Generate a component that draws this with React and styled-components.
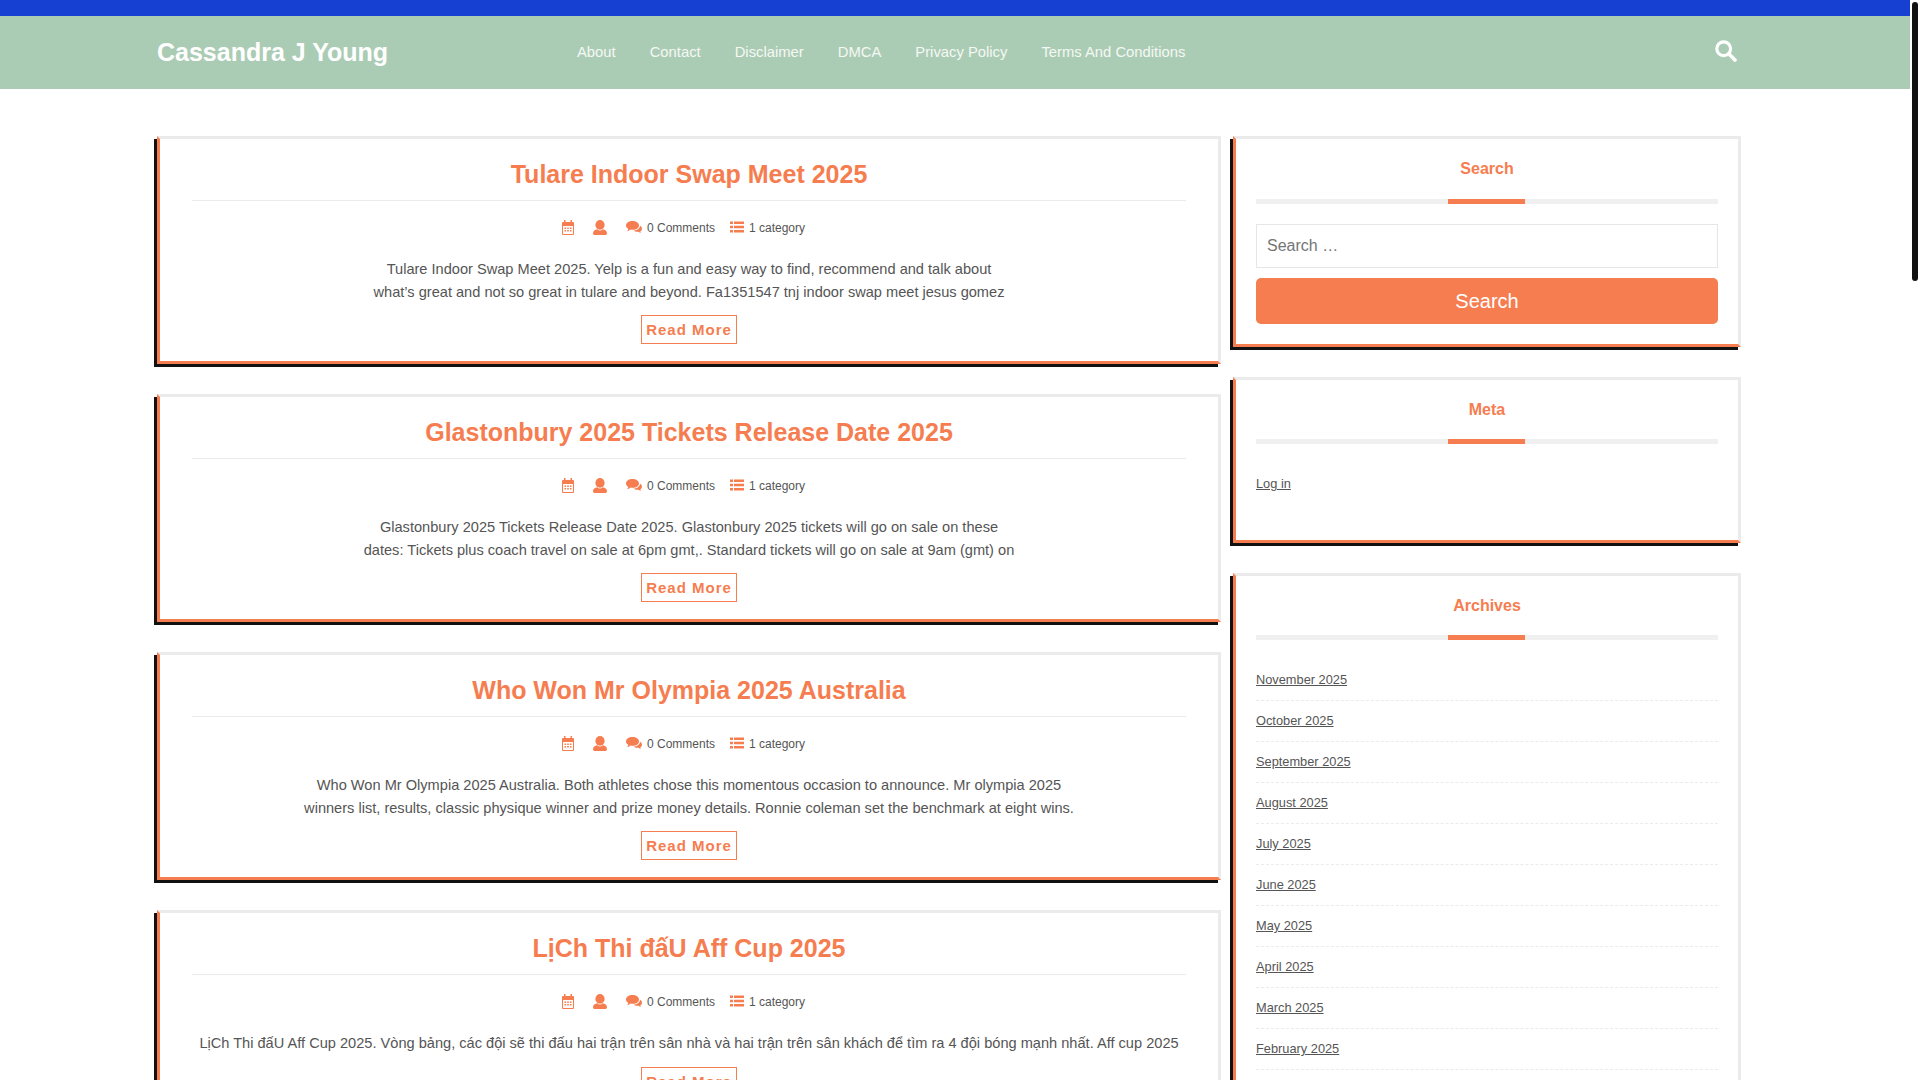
import React from 'react';
import styled, { createGlobalStyle } from 'styled-components';

const orange = '#f57d4f';

const GlobalStyle = createGlobalStyle`
    body {
        margin: 0;
        background: #fff;
        font-family: "Liberation Sans", Arial, sans-serif;
        color: #555;
    }
`;

const Page = styled.div`
    width: 1910px;
`;

// the site has a custom scrollbar, only the thumb can be seen
const ScrollThumb = styled.div`
    position: fixed;
    top: 2px;
    right: 2px;
    width: 6px;
    height: 279px;
    border-radius: 3px;
    background: #111;
`;

const TopBar = styled.div`
    height: 16px;
    background: #1540d2;
`;

const Header = styled.header`
    height: 73px;
    background: #abccb4;
    display: flex;
    align-items: center;
    padding: 0 173px 0 157px;
`;

const Logo = styled.a`
    width: 420px;
    color: #fff;
    font-size: 25px;
    font-weight: bold;
`;

const Nav = styled.nav`
    display: flex;
    gap: 34px;
    flex: 1;
    margin-top: -2px;
`;

const NavLink = styled.a`
    color: #f5f8f5;
    font-size: 14.8px;
`;

const SearchToggle = styled.svg`
    width: 22px;
    height: 22px;
    margin-top: -3px;
`;

const Content = styled.div`
    display: grid;
    grid-template-columns: 1064px 508px;
    column-gap: 12px;
    padding: 47px 0 0 157px;
`;

const Column = styled.div`
    display: flex;
    flex-direction: column;
    gap: 30px;
`;

const Card = styled.article`
    box-sizing: border-box;
    border: 3px solid #ebebeb;
    border-bottom-color: ${orange};
    border-left-color: ${orange};
    box-shadow: -3px 3px 0 #111;
    background: #fff;
`;

const Post = styled(Card)`
    padding: 17px 32px;
    text-align: center;
`;

const PostTitle = styled.h2`
    margin: 0 0 19px;
    padding-bottom: 8px;
    border-bottom: 1px solid #ebebeb;
    color: ${orange};
    font-size: 25px;
    line-height: 36px;
`;

const MetaRow = styled.div`
    display: flex;
    justify-content: center;
    gap: 14px;
    padding-right: 11px;
    font-size: 12px;
    line-height: 16px;
`;

const MetaItem = styled.span`
    display: inline-flex;
    align-items: center;
    gap: 5px;
    margin-left: ${(p) => p.$nudge || 0}px;
`;

const MetaIcon = styled.svg`
    flex: none;
    fill: ${orange};
    width: ${(p) => p.$w}px;
    height: ${(p) => p.$h}px;
    margin: -1px 0 1px;
`;

const Excerpt = styled.p`
    margin: 22px 0 12px;
    font-size: 14.6px;
    line-height: 22.5px;
`;

const ReadMore = styled.a`
    display: inline-block;
    box-sizing: border-box;
    height: 29px;
    width: 96px;
    border: 1px solid ${orange};
    color: ${orange};
    font-size: 15px;
    font-weight: bold;
    line-height: 27px;
    letter-spacing: 1px;
`;

const Widget = styled(Card)`
    padding: 20px;
`;

const WidgetTitle = styled.h3`
    box-sizing: border-box;
    margin: 0;
    padding-top: 1px;
    height: ${(p) => p.$height || 39}px;
    color: ${orange};
    font-size: 16px;
    line-height: 18px;
    text-align: center;
`;

const TitleBar = styled.div`
    height: 5px;
    background: #f0f0f0;
    display: flex;
    justify-content: center;
    &::after {
        content: '';
        width: 77px;
        margin-right: 1px;
        background: ${orange};
    }
`;

const SearchInput = styled.input`
    display: block;
    box-sizing: border-box;
    width: 100%;
    height: 44px;
    margin-top: 20px;
    padding: 0 10px;
    border: 1px solid #e6e6e6;
    font-family: inherit;
    font-size: 16px;
    &::placeholder {
        color: #757575;
    }
`;

const SearchButton = styled.button`
    display: block;
    width: 100%;
    height: 46px;
    margin-top: 10px;
    border: 0;
    border-radius: 5px;
    background: ${orange};
    color: #fff;
    font-family: inherit;
    font-size: 20px;
`;

const MetaLinks = styled.div`
    padding: 32px 0 28px;
    font-size: 12.8px;
    line-height: 16px;
`;

const Archive = styled.ul`
    list-style: none;
    margin: 20px 0 0;
    padding: 0;
    font-size: 12.8px;
`;

const ArchiveItem = styled.li`
    height: 41px;
    box-sizing: border-box;
    padding-top: 12px;
    line-height: 16px;
    border-bottom: 1px dashed #ebebeb;
`;

const TextLink = styled.a`
    color: #555;
    text-decoration: underline;
`;

const CalendarIcon = () => (
    <MetaIcon $w={12} $h={15} viewBox="0 0 12 15">
        <path d="M2 0h1.5v2h5V0H10v2h1a1 1 0 0 1 1 1v11a1 1 0 0 1-1 1H1a1 1 0 0 1-1-1V3a1 1 0 0 1 1-1h1zM1 6v7.5a.5.5 0 0 0 .5.5h9a.5.5 0 0 0 .5-.5V6z" />
        <path d="M2.5 7.5h1.6v1.5H2.5zM5.2 7.5h1.6v1.5H5.2zM7.9 7.5h1.6v1.5H7.9zM2.5 10h1.6v1.5H2.5zM5.2 10h1.6v1.5H5.2zM7.9 10h1.6v1.5H7.9z" />
    </MetaIcon>
);

const UserIcon = () => (
    <MetaIcon $w={14} $h={15} viewBox="0 0 14 15">
        <ellipse cx="7" cy="4.9" rx="4.6" ry="4.9" />
        <path d="M4.2 9.2C5 10 6 10.4 7 10.4s2-.4 2.8-1.2C12 9.5 14 10.8 14 13.2 14 14.4 13.2 15 12 15H2C.8 15 0 14.4 0 13.2 0 10.8 2 9.5 4.2 9.2z" />
    </MetaIcon>
);

const CommentsIcon = () => (
    <MetaIcon $w={16} $h={12} viewBox="0 0 16 12">
        <path d="M6.5 0C10.1 0 13 1.9 13 4.4S10.1 8.8 6.5 8.8c-.7 0-1.3-.1-1.9-.2C3.800 9.500 2.500 10 1.200 10.200c.6-.7 1-1.500 1.100-2.400C.9 7 0 5.800 0 4.400 0 1.900 2.900 0 6.500 0z" />
        <path d="M14 4.700c1.200.7 2 1.800 2 3 0 1.100-.6 2-1.700 2.700.1.600.4 1.200.9 1.600-1.100-.1-2-.6-2.700-1.300-.4.100-.8.100-1.200.100-1.500 0-2.900-.5-3.800-1.300 3.500-.1 6.300-2 6.500-4.800z" />
    </MetaIcon>
);

const ListIcon = () => (
    <MetaIcon $w={14} $h={12} viewBox="0 0 14 12">
        <path d="M0 .4h3V3H0zM4 .4h10V3H4zM0 4.700h3v2.600H0zM4 4.700h10v2.600H4zM0 9h3v2.600H0zM4 9h10v2.600H4z" />
    </MetaIcon>
);

const navItems = ['About', 'Contact', 'Disclaimer', 'DMCA', 'Privacy Policy', 'Terms And Conditions'];

const posts = [
    {
        title: 'Tulare Indoor Swap Meet 2025',
        lines: [
            'Tulare Indoor Swap Meet 2025. Yelp is a fun and easy way to find, recommend and talk about',
            'what’s great and not so great in tulare and beyond. Fa1351547 tnj indoor swap meet jesus gomez',
        ],
    },
    {
        title: 'Glastonbury 2025 Tickets Release Date 2025',
        lines: [
            'Glastonbury 2025 Tickets Release Date 2025. Glastonbury 2025 tickets will go on sale on these',
            'dates: Tickets plus coach travel on sale at 6pm gmt,. Standard tickets will go on sale at 9am (gmt) on',
        ],
    },
    {
        title: 'Who Won Mr Olympia 2025 Australia',
        lines: [
            'Who Won Mr Olympia 2025 Australia. Both athletes chose this momentous occasion to announce. Mr olympia 2025',
            'winners list, results, classic physique winner and prize money details. Ronnie coleman set the benchmark at eight wins.',
        ],
    },
    {
        title: 'LịCh Thi đấU Aff Cup 2025',
        lines: [
            'LịCh Thi đấU Aff Cup 2025. Vòng bảng, các đội sẽ thi đấu hai trận trên sân nhà và hai trận trên sân khách để tìm ra 4 đội bóng mạnh nhất. Aff cup 2025',
        ],
    },
];

const months = [
    'November 2025', 'October 2025', 'September 2025', 'August 2025', 'July 2025',
    'June 2025', 'May 2025', 'April 2025', 'March 2025', 'February 2025',
];

const App = () => (
    <Page>
        <GlobalStyle />
        <ScrollThumb />
        <TopBar />
        <Header>
            <Logo>Cassandra J Young</Logo>
            <Nav>
                {navItems.map((item) => (
                    <NavLink key={item}>{item}</NavLink>
                ))}
            </Nav>
            <SearchToggle viewBox="0 0 22 22" fill="none" stroke="#fff">
                <circle cx="8.700" cy="8.700" r="6.900" strokeWidth="3.200" />
                <path d="M13.800 13.800L20 20" strokeWidth="3.600" strokeLinecap="round" />
            </SearchToggle>
        </Header>
        <Content>
            <Column>
                {posts.map((post) => (
                    <Post key={post.title}>
                        <PostTitle>{post.title}</PostTitle>
                        <MetaRow>
                            <MetaItem><CalendarIcon /><span /></MetaItem>
                            <MetaItem><UserIcon /><span /></MetaItem>
                            <MetaItem><CommentsIcon />0 Comments</MetaItem>
                            <MetaItem $nudge={1}><ListIcon />1 category</MetaItem>
                        </MetaRow>
                        <Excerpt>
                            {post.lines.map((line) => (
                                <React.Fragment key={line}>{line}<br /></React.Fragment>
                            ))}
                        </Excerpt>
                        <ReadMore>Read More</ReadMore>
                    </Post>
                ))}
            </Column>
            <Column>
                <Widget>
                    <WidgetTitle $height={40}>Search</WidgetTitle>
                    <TitleBar />
                    <SearchInput placeholder="Search …" />
                    <SearchButton>Search</SearchButton>
                </Widget>
                <Widget>
                    <WidgetTitle>Meta</WidgetTitle>
                    <TitleBar />
                    <MetaLinks><TextLink>Log in</TextLink></MetaLinks>
                </Widget>
                <Widget>
                    <WidgetTitle>Archives</WidgetTitle>
                    <TitleBar />
                    <Archive>
                        {months.map((month) => (
                            <ArchiveItem key={month}><TextLink>{month}</TextLink></ArchiveItem>
                        ))}
                    </Archive>
                </Widget>
            </Column>
        </Content>
    </Page>
);

export default App;
